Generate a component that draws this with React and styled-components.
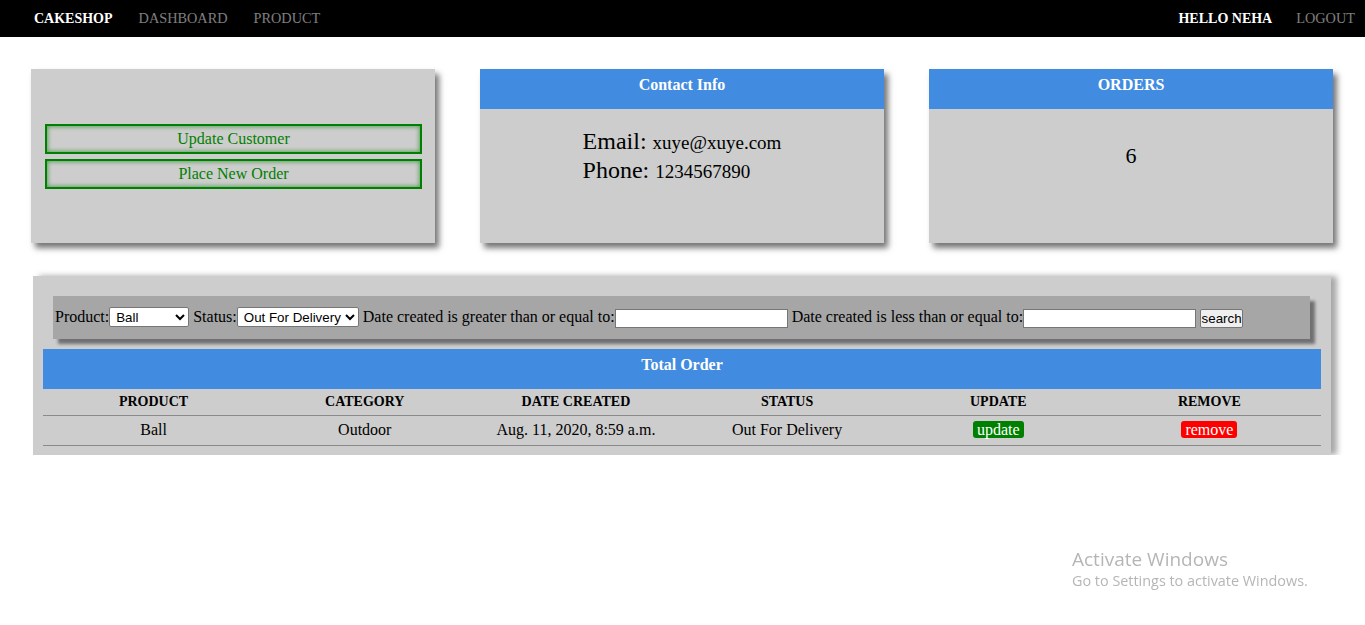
import React from "react";
import styled, { createGlobalStyle } from "styled-components";

const Global = createGlobalStyle`
  html, body { margin: 0; padding: 0; background: #fff; }
  body { font-family: "Liberation Serif", "Times New Roman", serif; color: #000; }
`;

const Nav = styled.nav`
  height: 37px;
  background: #000;
  display: flex;
  align-items: center;
  justify-content: space-between;
  padding: 0 10px 0 34px;
  font-size: 14px;
`;

const NavGroup = styled.div`
  display: flex;
  align-items: center;
  gap: ${(p) => p.$gap || 26}px;
`;

const NavItem = styled.a`
  color: ${(p) => (p.$strong ? "#fff" : "rgba(255,255,255,0.5)")};
  font-weight: ${(p) => (p.$strong ? "bold" : "normal")};
  font-size: ${(p) => (p.$strong ? 14 : 14.3)}px;
  text-decoration: none;
  text-transform: uppercase;
`;

const CardRow = styled.div`
  display: flex;
  gap: 45px;
  padding: 32px 32px 0 31px;
`;

const Card = styled.div`
  flex: 1;
  height: 174px;
  background: #cdcdcd;
  box-shadow: 4px 5px 6px rgba(0, 0, 0, 0.55);
  display: flex;
  flex-direction: column;
`;

const CardHeader = styled.div`
  height: 40px;
  background: #418be0;
  color: #fff;
  font-weight: bold;
  font-size: 16px;
  text-align: center;
  padding-top: 7px;
  box-sizing: border-box;
`;

const ActionBody = styled.div`
  flex: 1;
  display: flex;
  flex-direction: column;
  justify-content: center;
  gap: 5px;
  padding: 0 13px 0 14px;
`;

const ActionButton = styled.button`
  height: 30px;
  border: 2px solid #008000;
  background: #cdcdcd;
  box-shadow: inset 0 0 4px 1px rgba(0, 128, 0, 0.55);
  color: #008000;
  font-family: "Liberation Serif", serif;
  font-size: 16px;
  padding: 0;
`;

const ContactBody = styled.div`
  flex: 1;
  display: flex;
  justify-content: center;
  padding-top: 19px;
`;

const ContactList = styled.div`
  line-height: 27px;
`;

const ContactLabel = styled.span`
  font-size: 24px;
`;

const ContactValue = styled.span`
  font-size: 19px;
`;

const OrderCount = styled.div`
  text-align: center;
  font-size: 22px;
  padding-top: 34px;
`;

const Section = styled.section`
  margin: 33px 34px 0 33px;
  height: 179px;
  background: #cdcdcd;
  box-shadow: 6px 0 6px rgba(0, 0, 0, 0.35);
  padding: 20px 10px 0 10px;
  box-sizing: border-box;
`;

const FilterBar = styled.form`
  margin: 0 11px 0 10px;
  height: 43px;
  line-height: 41px;
  background: #a6a6a6;
  box-shadow: 5px 5px 3px rgba(0, 0, 0, 0.45);
  padding-left: 2px;
  font-size: 16px;
  white-space: nowrap;

  & > * {
    vertical-align: middle;
  }
`;

const Select = styled.select`
  font-family: Arial, "Liberation Sans", sans-serif;
  font-size: 13.33px;
  height: 20px;
  width: ${(p) => p.$w}px;
  border: 1px solid #767676;
  border-radius: 2px;
  background: #fff;
  padding: 0 0 0 2px;
  margin: 0;
  position: relative;
  top: -1px;
`;

const TextInput = styled.input`
  width: 173px;
  height: 19px;
  box-sizing: border-box;
  border: 1px solid #767676;
  margin: 0;
  padding: 1px 2px;
  background: #fff;
`;

const SearchButton = styled.button`
  font-family: Arial, "Liberation Sans", sans-serif;
  font-size: 13.33px;
  height: 19px;
  width: 43px;
  padding: 0;
  margin: 0;
  border: 1px solid #767676;
  border-radius: 2px;
  background: #efefef;
`;

const TableWrap = styled.div`
  margin-top: 10px;
`;

const TableTitle = styled.div`
  height: 40px;
  background: #418be0;
  color: #fff;
  font-weight: bold;
  font-size: 16px;
  text-align: center;
  padding-top: 7px;
  box-sizing: border-box;
`;

const Row = styled.div`
  display: grid;
  grid-template-columns: repeat(6, 1fr);
  height: ${(p) => (p.$head ? 26 : 28)}px;
  padding-bottom: ${(p) => (p.$head ? 0 : 1)}px;
  border-bottom: 1px solid #8a8a8a;
  align-items: center;
  text-align: center;
  font-size: ${(p) => (p.$head ? 14 : 16)}px;
  font-weight: ${(p) => (p.$head ? "bold" : "normal")};
  padding-left: 5px;
  padding-right: 6px;
`;

const Cell = styled.div``;

const Pill = styled.span`
  display: inline-block;
  background: ${(p) => p.$bg};
  color: #fff;
  border-radius: 3px;
  padding: 0 4px;
  line-height: 17px;
  font-size: 16px;
`;

const Watermark = styled.div`
  position: fixed;
  left: 1072px;
  top: 546px;
  font-family: "Open Sans", "Noto Sans", sans-serif;
  color: rgba(120, 120, 120, 0.55);
  pointer-events: none;
`;

const WmTitle = styled.div`
  font-size: 19px;
  line-height: 26px;
`;

const WmSub = styled.div`
  font-size: 14.4px;
  line-height: 18px;
`;

export default function App() {
  return (
    <>
      <Global />
      <Nav>
        <NavGroup $gap={26}>
          <NavItem $strong>CAKESHOP</NavItem>
          <NavItem>Dashboard</NavItem>
          <NavItem>Product</NavItem>
        </NavGroup>
        <NavGroup $gap={24}>
          <NavItem $strong>Hello Neha</NavItem>
          <NavItem>Logout</NavItem>
        </NavGroup>
      </Nav>

      <CardRow>
        <Card>
          <ActionBody>
            <ActionButton>Update Customer</ActionButton>
            <ActionButton>Place New Order</ActionButton>
          </ActionBody>
        </Card>
        <Card>
          <CardHeader>Contact Info</CardHeader>
          <ContactBody>
            <ContactList>
              <div>
                <ContactLabel>Email: </ContactLabel>
                <ContactValue>xuye@xuye.com</ContactValue>
              </div>
              <div>
                <ContactLabel>Phone: </ContactLabel>
                <ContactValue>1234567890</ContactValue>
              </div>
            </ContactList>
          </ContactBody>
        </Card>
        <Card>
          <CardHeader>ORDERS</CardHeader>
          <OrderCount>6</OrderCount>
        </Card>
      </CardRow>

      <Section>
        <FilterBar>
          Product:
          <Select $w={80} defaultValue="Ball">
            <option>Ball</option>
          </Select>
          {" Status:"}
          <Select $w={122} defaultValue="Out For Delivery">
            <option>Out For Delivery</option>
          </Select>
          {" Date created is greater than or equal to:"}
          <TextInput type="text" />
          {" Date created is less than or equal to:"}
          <TextInput type="text" />{" "}
          <SearchButton type="button">search</SearchButton>
        </FilterBar>
        <TableWrap>
          <TableTitle>Total Order</TableTitle>
          <Row $head>
            <Cell>PRODUCT</Cell>
            <Cell>CATEGORY</Cell>
            <Cell>DATE CREATED</Cell>
            <Cell>STATUS</Cell>
            <Cell>UPDATE</Cell>
            <Cell>REMOVE</Cell>
          </Row>
          <Row>
            <Cell>Ball</Cell>
            <Cell>Outdoor</Cell>
            <Cell>Aug. 11, 2020, 8:59 a.m.</Cell>
            <Cell>Out For Delivery</Cell>
            <Cell>
              <Pill $bg="#008000">update</Pill>
            </Cell>
            <Cell>
              <Pill $bg="#ff0000">remove</Pill>
            </Cell>
          </Row>
        </TableWrap>
      </Section>

      <Watermark>
        <WmTitle>Activate Windows</WmTitle>
        <WmSub>Go to Settings to activate Windows.</WmSub>
      </Watermark>
    </>
  );
}
